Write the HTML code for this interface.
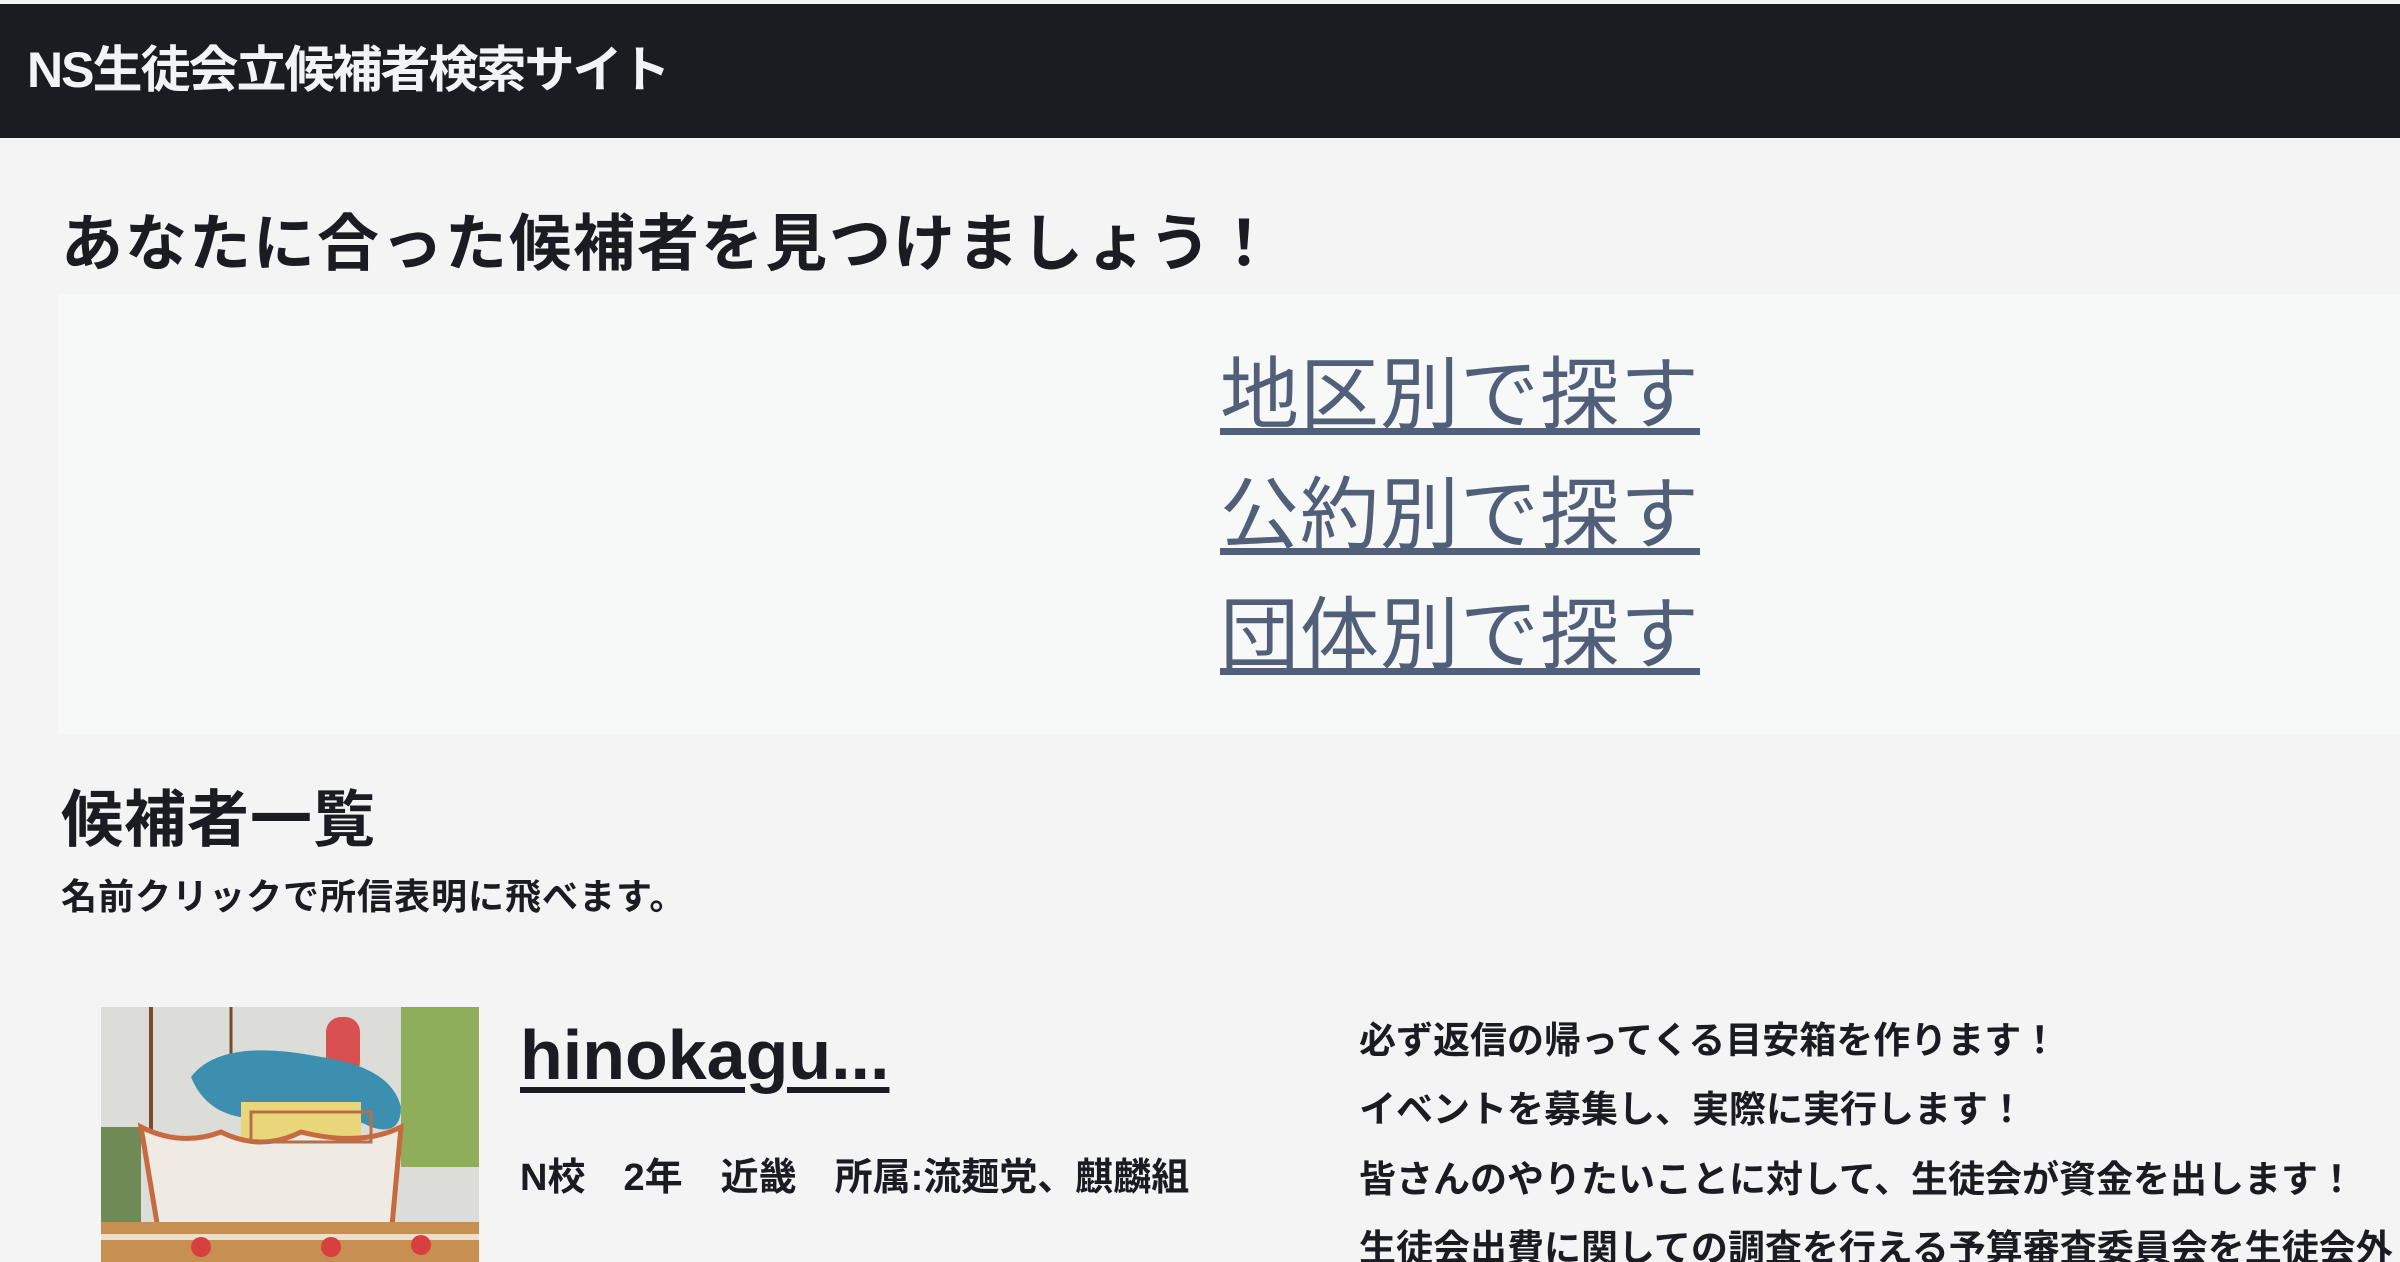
<!DOCTYPE html>
<html><head><meta charset="utf-8"><style>
*{margin:0;padding:0;box-sizing:border-box}
html,body{overflow:hidden}
body{width:2400px;height:1262px;overflow:hidden;background:#f4f4f4;color:#1a1c22;font-family:"Liberation Sans","Noto Sans CJK JP",sans-serif;position:relative}
.top{position:absolute;left:0;top:4px;width:2400px;height:134px;background:#1a1c22}
.top h1{position:absolute;left:27px;top:36px;font-size:50px;line-height:60px;color:#f2f3f7;font-weight:bold;letter-spacing:-2px;white-space:nowrap}
.h2{position:absolute;left:61px;top:208px;font-size:62px;line-height:74px;font-weight:bold;white-space:nowrap;letter-spacing:2px}
.panel{position:absolute;left:58px;top:294px;width:2342px;height:440px;background:#f7f8f8}
.links a{position:absolute;left:1220px;font-size:79px;line-height:90px;color:#525f78;text-decoration:underline;text-decoration-thickness:7px;text-underline-offset:6px;white-space:nowrap;letter-spacing:1px}
.h3{position:absolute;left:61px;top:784px;font-size:62px;line-height:74px;font-weight:bold;white-space:nowrap;letter-spacing:1px}
.p{position:absolute;left:61px;top:876px;font-size:36px;line-height:42px;font-weight:bold;white-space:nowrap;letter-spacing:1px}
.img{position:absolute;left:101px;top:1007px;width:378px;height:255px;overflow:hidden}
.name{position:absolute;left:520px;top:1015px;font-size:70px;line-height:80px;font-weight:bold;color:#1a1c22;text-decoration:underline;text-decoration-thickness:6px;text-underline-offset:8px;white-space:nowrap}
.info{position:absolute;left:520px;top:1156px;font-size:38px;line-height:44px;font-weight:bold;white-space:nowrap}
.pl{position:absolute;left:1359px;font-size:37px;line-height:44px;font-weight:bold;white-space:nowrap}
</style></head><body>
<div class="top"><h1>NS生徒会立候補者検索サイト</h1></div>
<div class="h2">あなたに合った候補者を見つけましょう！</div>
<div class="panel"></div>
<div class="links">
<a style="top:350px">地区別で探す</a>
<a style="top:470px">公約別で探す</a>
<a style="top:590px">団体別で探す</a>
</div>
<div class="h3">候補者一覧</div>
<div class="p">名前クリックで所信表明に飛べます。</div>
<div class="img"><svg width="378" height="255" viewBox="0 0 378 255">
<rect width="378" height="255" fill="#dcdcd8"/>
<rect x="300" y="0" width="78" height="160" fill="#8fae5c"/>
<rect x="0" y="120" width="40" height="135" fill="#6f8a55"/>
<line x1="50" y1="0" x2="50" y2="150" stroke="#7a4a30" stroke-width="4"/>
<line x1="130" y1="0" x2="130" y2="100" stroke="#7a4a30" stroke-width="3"/>
<rect x="225" y="10" width="34" height="60" rx="15" fill="#d85050"/>
<path d="M90 70 Q120 30 220 50 Q290 60 300 100 Q300 130 270 120 Q230 100 180 110 Q110 120 90 70Z" fill="#3d8fb0"/>
<rect x="140" y="95" width="120" height="60" fill="#e9d67a"/>
<path d="M40 120 Q80 140 120 125 Q160 145 200 125 Q260 140 300 120 L290 230 L60 240Z" fill="#efeae2" stroke="#c86a40" stroke-width="5"/>
<rect x="150" y="105" width="120" height="30" fill="none" stroke="#b5704a" stroke-width="3"/>
<rect x="0" y="215" width="378" height="40" fill="#c89050"/>
<path d="M0 230 H378" stroke="#e8e0d0" stroke-width="6"/>
<circle cx="100" cy="240" r="10" fill="#d84040"/><circle cx="230" cy="240" r="10" fill="#d84040"/><circle cx="320" cy="238" r="10" fill="#d84040"/>
</svg></div>
<a class="name">hinokagu...</a>
<div class="info">N校　2年　近畿　所属:流麺党、麒麟組</div>
<div class="pl" style="top:1019px">必ず返信の帰ってくる目安箱を作ります！</div>
<div class="pl" style="top:1088px">イベントを募集し、実際に実行します！</div>
<div class="pl" style="top:1158px">皆さんのやりたいことに対して、生徒会が資金を出します！</div>
<div class="pl" style="top:1227px">生徒会出費に関しての調査を行える予算審査委員会を生徒会外</div>
</body></html>
